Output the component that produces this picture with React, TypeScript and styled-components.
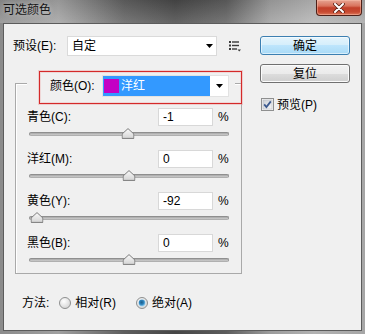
import React from "react";
import styled, { createGlobalStyle } from "styled-components";

const Global = createGlobalStyle`
  html, body { margin: 0; padding: 0; background: #f0f0f0; }
  * { box-sizing: border-box; }
`;

const FONT = `"Liberation Sans", "Noto Sans CJK SC", sans-serif`;

const Window = styled.div`
  width: 365px;
  height: 334px;
  display: flex;
  flex-direction: column;
  font-family: ${FONT};
  font-size: 12px;
  line-height: 14px;
  white-space: nowrap;
  color: #000;
  background: linear-gradient(90deg, #8b8b8b 0%, #a0a0a0 16%, #5e5e5e 34%, #464646 48%, #5c5c5c 62%, #9c9c9c 74%, #b2b2b2 86%, #a6a6a6 100%);
`;

const TitleBar = styled.div`
  height: 23px;
  flex: none;
  display: flex;
  justify-content: space-between;
  align-items: flex-start;
  background: linear-gradient(180deg, rgba(0, 0, 0, 0.06) 0%, rgba(255, 255, 255, 0.16) 100%);
`;

const Title = styled.div`
  padding: 3px 0 0 3px;
  font-size: 12px;
  line-height: 14px;
  color: #141414;
  text-shadow: 0 0 5px rgba(255, 255, 255, 0.55);
`;

const CloseButton = styled.div`
  width: 46px;
  height: 16px;
  margin-right: 3px;
  display: flex;
  align-items: center;
  justify-content: center;
  border: 1px solid #4e2018;
  border-top: none;
  border-radius: 0 0 4px 4px;
  background: linear-gradient(180deg, #e6a492 0%, #d9735d 40%, #c2402a 52%, #c84a31 80%, #dd7a5d 100%);
  box-shadow: inset 0 0 0 1px rgba(255, 200, 180, 0.45);
`;

const Client = styled.div`
  flex: 1;
  margin: 0 3px 3px;
  border: 1px solid #5c5c5c;
  background: #f0f0f0;
  display: grid;
  grid-template-columns: 256px 90px;
  align-items: start;
  padding-top: 12px;
`;

const LeftColumn = styled.div`
  display: flex;
  flex-direction: column;
`;

const RightColumn = styled.div`
  display: flex;
  flex-direction: column;
`;

const PresetRow = styled.div`
  height: 20px;
  display: flex;
  align-items: center;
  padding-left: 9px;
`;

const PresetLabel = styled.span`
  width: 54px;
`;

const Select = styled.div<{ $width: number }>`
  width: ${(p) => p.$width}px;
  height: 20px;
  display: flex;
  align-items: center;
  justify-content: space-between;
  background: #fff;
  border: 1px solid #dadada;
  padding: 0 3px 0 4px;
`;

const MenuButton = styled.div`
  margin-left: 12px;
  width: 12px;
  height: 11px;
  display: flex;
`;

const GroupBox = styled.fieldset`
  margin: 13px 0 0 11px;
  width: 227px;
  min-width: 0;
  padding: 11px 12px 5px 11px;
  border: 1px solid #a9a9a9;
  box-shadow: inset 1px 1px 0 #ffffff;
`;

const Legend = styled.legend`
  position: relative;
  padding: 6px 6px 0 23px;
  margin: 0;
  background: #f0f0f0;
`;

const LegendRow = styled.div`
  display: flex;
  align-items: center;
  gap: 6px;
  height: 22px;
`;

const LegendLabel = styled.span`
  flex: none;
  width: 46px;
`;

const Annotation = styled.div`
  position: absolute;
  left: 12px;
  top: 2px;
  width: 203px;
  height: 33px;
  border: 1px solid #d42a2a;
  box-shadow: 0 0 0 1px rgba(235, 140, 140, 0.35), inset 0 0 0 1px rgba(235, 140, 140, 0.25);
  pointer-events: none;
`;

const ColorSelect = styled.div`
  flex: none;
  width: 127px;
  height: 22px;
  display: flex;
  align-items: stretch;
  background: #fff;
  border: 1px solid #e2e2e2;
`;

const Highlight = styled.div`
  width: 107px;
  display: flex;
  align-items: center;
  gap: 2px;
  background: #3399ff;
  color: #fff;
  padding-left: 1px;
`;

const Swatch = styled.span<{ $color: string }>`
  width: 15px;
  height: 14px;
  background: ${(p) => p.$color};
`;

const ArrowBox = styled.div`
  flex: 1;
  display: flex;
  align-items: center;
  justify-content: center;
`;

const Rows = styled.div`
  display: flex;
  flex-direction: column;
  gap: 8px;
`;

const SliderRow = styled.div`
  display: flex;
  flex-direction: column;
`;

const RowHeader = styled.div`
  height: 18px;
  display: flex;
  align-items: center;
`;

const RowLabel = styled.span`
  flex: 1;
`;

const NumInput = styled.input`
  width: 55px;
  height: 18px;
  border: 1px solid #d8d8d8;
  background: #fff;
  padding: 0 0 0 4px;
  margin: 0;
  font-family: ${FONT};
  font-size: 12px;
  color: #000;
  outline: none;
`;

const Percent = styled.span`
  margin-left: 5px;
  width: 11px;
`;

const SliderArea = styled.div`
  position: relative;
  height: 16px;
  margin-left: 2px;
`;

const Track = styled.div`
  margin-top: 6px;
  height: 4px;
  border-radius: 2px;
  border: 1px solid #8f8f8f;
  border-bottom-color: #b0b0b0;
  background: linear-gradient(180deg, #a8a8a8, #cdcdcd);
`;

const Thumb = styled.svg`
  position: absolute;
  top: 2px;
  transform: translateX(-50%);
`;

const MethodRow = styled.div`
  margin-top: 21px;
  height: 16px;
  display: flex;
  align-items: center;
  padding-left: 18px;
`;

const MethodLabel = styled.span`
  margin-right: 10px;
`;

const RadioOption = styled.label`
  display: flex;
  align-items: center;
  gap: 4px;
  margin-right: 20px;
`;

const Button = styled.div<{ $primary?: boolean }>`
  height: 19px;
  display: flex;
  align-items: center;
  justify-content: center;
  border-radius: 3px;
  border: 1px solid ${(p) => (p.$primary ? "#3c7fb1" : "#707070")};
  background: ${(p) =>
    p.$primary
      ? "linear-gradient(180deg, #e5f4fc 0%, #d4eefb 50%, #bde5fc 50%, #a9daf6 100%)"
      : "linear-gradient(180deg, #f2f2f2 0%, #ebebeb 50%, #dddddd 50%, #cfcfcf 100%)"};
  box-shadow: inset 0 0 0 1px ${(p) => (p.$primary ? "rgba(255,255,255,0.55)" : "#fbfbfb")};
  & + & {
    margin-top: 9px;
  }
`;

const CheckRow = styled.label`
  margin-top: 15px;
  margin-left: 1px;
  display: flex;
  align-items: center;
  gap: 3px;
  height: 13px;
`;

const DownArrow = () => (
  <svg width="7" height="4" viewBox="0 0 7 4">
    <polygon points="0,0 7,0 3.5,4" fill="#000" />
  </svg>
);

const MenuIcon = () => (
  <svg width="12" height="11" viewBox="0 0 12 11">
    <g fill="#3a3a3a">
      <rect x="0" y="0" width="2" height="2" />
      <rect x="3" y="0.3" width="7" height="1.4" />
      <rect x="0" y="3.5" width="2" height="2" />
      <rect x="3" y="3.8" width="7" height="1.4" />
      <rect x="0" y="7" width="2" height="2" />
      <rect x="3" y="7.3" width="5" height="1.4" />
      <polygon points="8.5,8.5 12,8.5 10.25,10.5" />
    </g>
  </svg>
);

const CloseX = () => (
  <svg width="12" height="10" viewBox="0 0 12 10">
    <path d="M2 1 L10 9 M10 1 L2 9" stroke="#5a2216" strokeWidth="3.6" strokeLinecap="round" />
    <path d="M2 1 L10 9 M10 1 L2 9" stroke="#ffffff" strokeWidth="2" strokeLinecap="round" />
  </svg>
);

const ThumbIcon = ({ pos }: { pos: number }) => (
  <Thumb width="13" height="11" viewBox="0 0 13 11" style={{ left: `${pos}%` }}>
    <defs>
      <linearGradient id="thumbFill" x1="0" y1="0" x2="0" y2="1">
        <stop offset="0" stopColor="#fafafa" />
        <stop offset="1" stopColor="#d4d4d4" />
      </linearGradient>
    </defs>
    <path d="M6.5 0.6 L12.4 6 L12.4 10.4 L0.6 10.4 L0.6 6 Z" fill="url(#thumbFill)" stroke="#7c7c7c" strokeWidth="1" strokeLinejoin="round" />
  </Thumb>
);

const Radio = ({ checked }: { checked?: boolean }) => (
  <svg width="12" height="12" viewBox="0 0 12 12">
    <defs>
      <radialGradient id="radioBg" cx="0.4" cy="0.35" r="0.7">
        <stop offset="0" stopColor="#ffffff" />
        <stop offset="1" stopColor="#d2d2d2" />
      </radialGradient>
      <radialGradient id="radioDot" cx="0.45" cy="0.4" r="0.6">
        <stop offset="0" stopColor="#1b5d8a" />
        <stop offset="0.55" stopColor="#2f86bf" />
        <stop offset="1" stopColor="#9fd6f5" />
      </radialGradient>
    </defs>
    <circle cx="6" cy="6" r="5.5" fill="url(#radioBg)" stroke="#8e8f8f" strokeWidth="1" />
    {checked && <circle cx="6" cy="6" r="3.4" fill="url(#radioDot)" />}
  </svg>
);

const Checkbox = () => (
  <svg width="13" height="13" viewBox="0 0 13 13">
    <defs>
      <linearGradient id="cbInner" x1="0" y1="0" x2="1" y2="1">
        <stop offset="0" stopColor="#cbcfd5" />
        <stop offset="1" stopColor="#f7f7f7" />
      </linearGradient>
    </defs>
    <rect x="0.5" y="0.5" width="12" height="12" fill="#f4f4f4" stroke="#8e8f8f" />
    <rect x="2" y="2" width="9" height="9" fill="url(#cbInner)" stroke="#b9bcc2" strokeWidth="0.6" />
    <path d="M3.2 6.4 L5.4 9 L9.8 3.4" fill="none" stroke="#3c5a8f" strokeWidth="1.8" />
  </svg>
);

const sliders = [
  { label: "青色(C):", value: -1 },
  { label: "洋红(M):", value: 0 },
  { label: "黄色(Y):", value: -92 },
  { label: "黑色(B):", value: 0 },
];

export default function App() {
  return (
    <>
      <Global />
      <Window>
        <TitleBar>
          <Title>可选颜色</Title>
          <CloseButton>
            <CloseX />
          </CloseButton>
        </TitleBar>
        <Client>
          <LeftColumn>
            <PresetRow>
              <PresetLabel>预设(E):</PresetLabel>
              <Select $width={150}>
                <span>自定</span>
                <DownArrow />
              </Select>
              <MenuButton>
                <MenuIcon />
              </MenuButton>
            </PresetRow>

            <GroupBox>
              <Legend>
                <LegendRow>
                  <LegendLabel>颜色(O):</LegendLabel>
                  <ColorSelect>
                    <Highlight>
                      <Swatch $color="#c400c4" />
                      <span>洋红</span>
                    </Highlight>
                    <ArrowBox>
                      <DownArrow />
                    </ArrowBox>
                  </ColorSelect>
                </LegendRow>
                <Annotation />
              </Legend>
              <Rows>
                {sliders.map((s) => (
                  <SliderRow key={s.label}>
                    <RowHeader>
                      <RowLabel>{s.label}</RowLabel>
                      <NumInput readOnly value={String(s.value)} />
                      <Percent>%</Percent>
                    </RowHeader>
                    <SliderArea>
                      <Track />
                      <ThumbIcon pos={((s.value + 100) / 200) * 100} />
                    </SliderArea>
                  </SliderRow>
                ))}
              </Rows>
            </GroupBox>

            <MethodRow>
              <MethodLabel>方法:</MethodLabel>
              <RadioOption>
                <Radio />
                <span>相对(R)</span>
              </RadioOption>
              <RadioOption>
                <Radio checked />
                <span>绝对(A)</span>
              </RadioOption>
            </MethodRow>
          </LeftColumn>

          <RightColumn>
            <Button $primary>确定</Button>
            <Button>复位</Button>
            <CheckRow>
              <Checkbox />
              <span>预览(P)</span>
            </CheckRow>
          </RightColumn>
        </Client>
      </Window>
    </>
  );
}
